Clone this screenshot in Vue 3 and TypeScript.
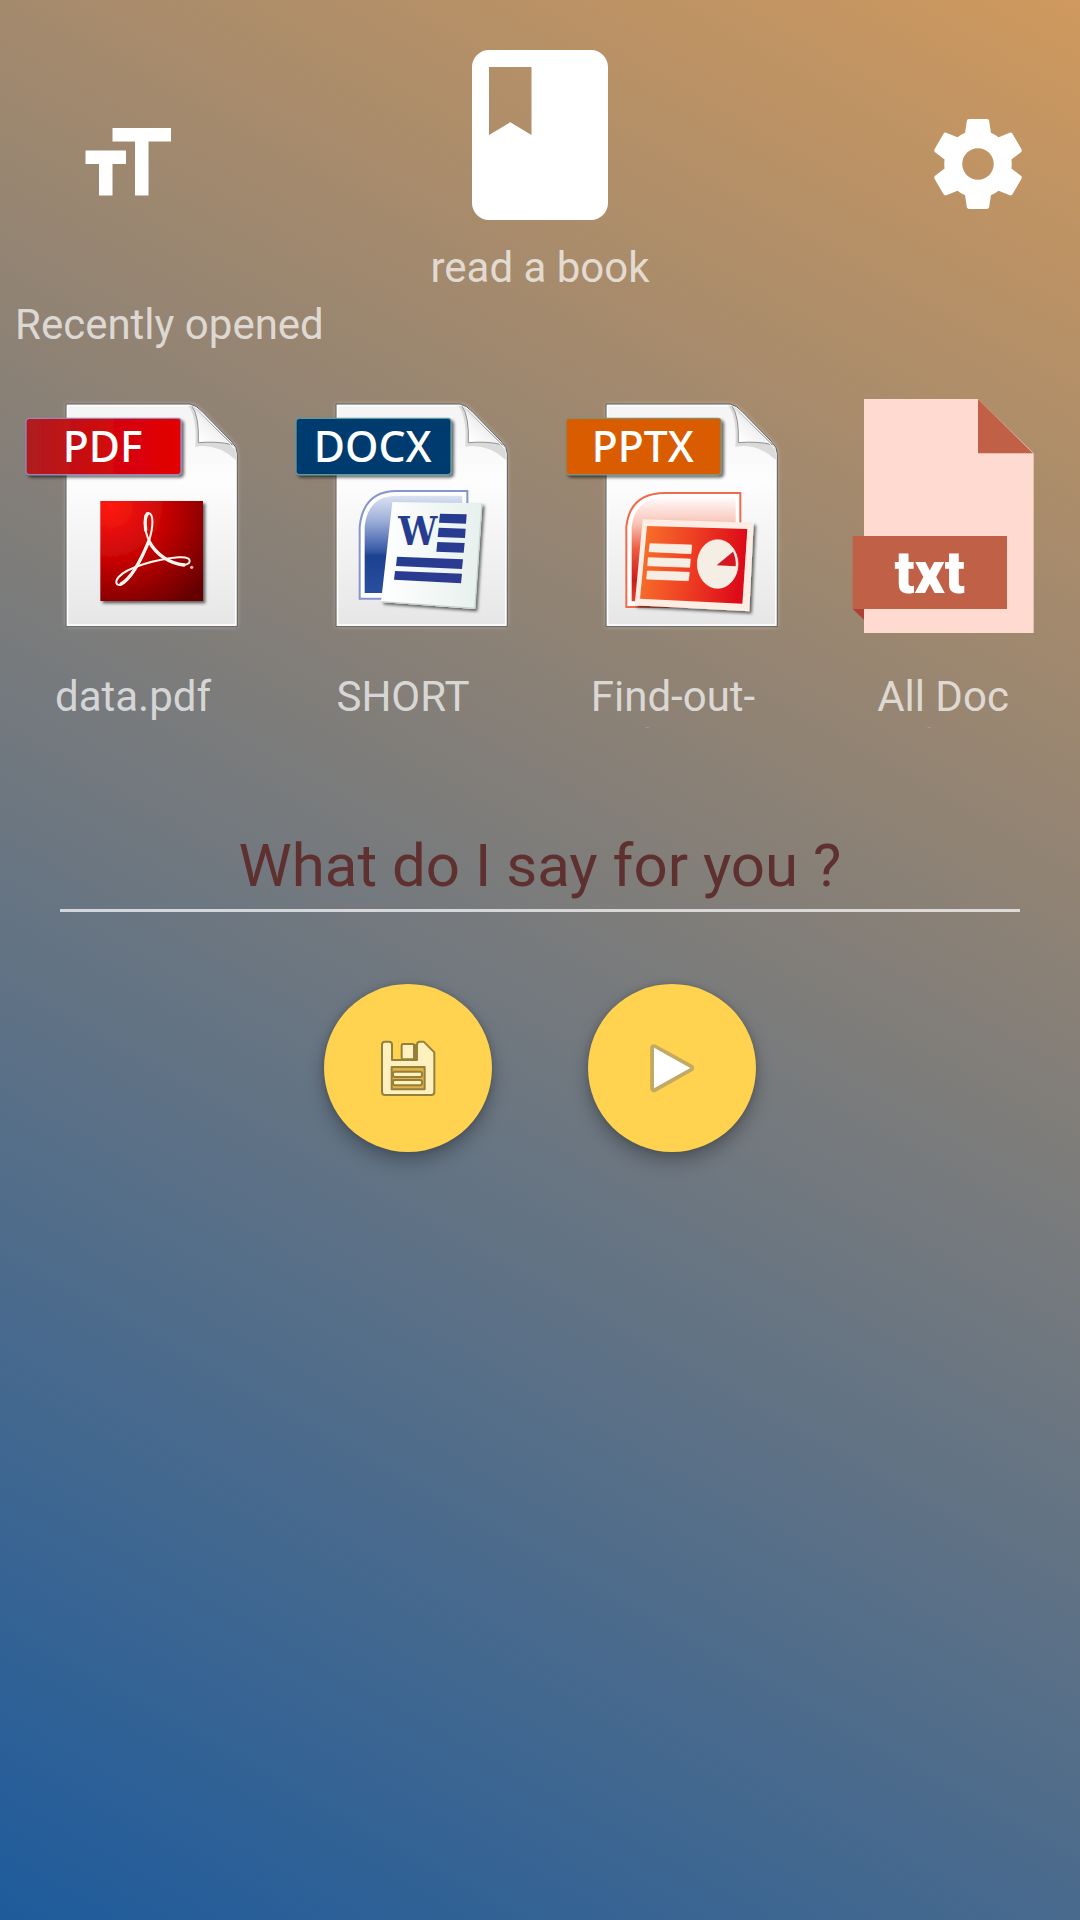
<script setup lang="ts">
import { ref } from 'vue'

type Kind = 'pdf' | 'docx' | 'pptx' | 'txt'

interface RecentFile {
  kind: Kind
  badge: string
  color: string
  edge: string
  name: string
}

const files: RecentFile[] = [
  { kind: 'pdf', badge: 'PDF', color: 'url(#pdfBadge)', edge: '#9a84b8', name: 'data.pdf' },
  { kind: 'docx', badge: 'DOCX', color: '#003a70', edge: '#5f9a9c', name: 'SHORT' },
  { kind: 'pptx', badge: 'PPTX', color: '#d95b00', edge: '#7f8f78', name: 'Find-out- if.ppt' },
  { kind: 'txt', badge: 'txt', color: '#bf6047', edge: 'none', name: 'All Doc for' },
]

const speech = ref('')
</script>

<template>
  <main class="screen">
    <header class="top">
      <button class="icon-button size-button" type="button" aria-label="Text size">
        <svg viewBox="0 0 24 24"><path d="M9 4v3h5v12h3V7h5V4H9zm-6 8h3v7h3v-7h3V9H3v3z" /></svg>
      </button>
      <button class="book-button" type="button">
        <svg viewBox="0 0 24 24">
          <path d="M18 2H6c-1.1 0-2 .9-2 2v16c0 1.1.9 2 2 2h12c1.1 0 2-.9 2-2V4c0-1.1-.9-2-2-2zM6 4h5v8l-2.5-1.5L6 12V4z" />
        </svg>
        <span>read a book</span>
      </button>
      <button class="icon-button settings-button" type="button" aria-label="Settings">
        <svg viewBox="0 0 24 24">
          <path d="M19.43 12.98c.04-.32.07-.64.07-.98s-.03-.66-.07-.98l2.11-1.65c.19-.15.24-.42.12-.64l-2-3.46c-.12-.22-.39-.3-.61-.22l-2.49 1c-.52-.4-1.08-.73-1.69-.98l-.38-2.65C14.46 2.18 14.25 2 14 2h-4c-.25 0-.46.18-.49.42l-.38 2.65c-.61.25-1.17.59-1.69.98l-2.49-1c-.23-.09-.49 0-.61.22l-2 3.46c-.13.22-.07.49.12.64l2.11 1.65c-.04.32-.07.65-.07.98s.03.66.07.98l-2.11 1.65c-.19.15-.24.42-.12.64l2 3.46c.12.22.39.3.61.22l2.49-1c.52.4 1.08.73 1.69.98l.38 2.65c.03.24.24.42.49.42h4c.25 0 .46-.18.49-.42l.38-2.65c.61-.25 1.17-.59 1.69-.98l2.49 1c.23.09.49 0 .61-.22l2-3.46c.12-.22.07-.49-.12-.64l-2.11-1.65zM12 15.5c-1.93 0-3.5-1.57-3.5-3.5s1.57-3.5 3.5-3.5 3.5 1.57 3.5 3.5-1.57 3.5-3.5 3.5z" />
        </svg>
      </button>
    </header>

    <h2 class="recent-title">Recently opened</h2>

    <svg class="defs" aria-hidden="true">
      <defs>
        <linearGradient id="paper" x1="0" y1="0" x2="0" y2="1">
          <stop offset="0" stop-color="#f4f4f4" />
          <stop offset="0.35" stop-color="#fdfdfd" />
          <stop offset="1" stop-color="#e6e6e6" />
        </linearGradient>
        <linearGradient id="foldShade" x1="0.2" y1="0.9" x2="0.75" y2="0.35">
          <stop offset="0" stop-color="#ffffff" />
          <stop offset="0.55" stop-color="#f2f2f2" />
          <stop offset="1" stop-color="#b4b4b4" />
        </linearGradient>
        <linearGradient id="pdfBadge" x1="0" y1="0" x2="1" y2="0">
          <stop offset="0" stop-color="#ae1d20" />
          <stop offset="0.6" stop-color="#d60508" />
          <stop offset="1" stop-color="#e30005" />
        </linearGradient>
        <radialGradient id="pdfTile" cx="0.1" cy="0.05" r="1.2">
          <stop offset="0" stop-color="#ff1a12" />
          <stop offset="0.45" stop-color="#c80505" />
          <stop offset="1" stop-color="#640000" />
        </radialGradient>
        <linearGradient id="wordBack" x1="0" y1="0" x2="0" y2="1">
          <stop offset="0" stop-color="#dbe2f2" />
          <stop offset="0.25" stop-color="#9fb0da" />
          <stop offset="0.56" stop-color="#3a5ba8" />
          <stop offset="0.62" stop-color="#1c418f" />
          <stop offset="1" stop-color="#2a4f9e" />
        </linearGradient>
        <linearGradient id="wordInk" x1="0" y1="0" x2="1" y2="1">
          <stop offset="0" stop-color="#1f3f92" />
          <stop offset="1" stop-color="#2f3990" />
        </linearGradient>
        <linearGradient id="wordPage" x1="0" y1="0" x2="1" y2="0">
          <stop offset="0" stop-color="#ffffff" />
          <stop offset="1" stop-color="#e6f0ec" />
        </linearGradient>
        <linearGradient id="pptBack" x1="0" y1="0" x2="0" y2="1">
          <stop offset="0" stop-color="#fffafa" />
          <stop offset="0.25" stop-color="#f9c3b6" />
          <stop offset="0.5" stop-color="#ec5b40" />
          <stop offset="0.8" stop-color="#c91d1b" />
          <stop offset="1" stop-color="#df4527" />
        </linearGradient>
        <linearGradient id="pptSlide" x1="0" y1="0" x2="1" y2="0.1">
          <stop offset="0" stop-color="#f8742c" />
          <stop offset="0.5" stop-color="#ee4023" />
          <stop offset="1" stop-color="#dd0a18" />
        </linearGradient>
        <filter id="drop" x="-20%" y="-20%" width="150%" height="150%">
          <feDropShadow dx="7" dy="7" stdDeviation="5" flood-color="#000" flood-opacity="0.6" />
        </filter>
        <filter id="glow" x="-20%" y="-20%" width="140%" height="140%">
          <feDropShadow dx="0" dy="0" stdDeviation="6" flood-color="#fff" flood-opacity="0.4" />
        </filter>
      </defs>
    </svg>

    <ul class="files">
      <li v-for="file in files" :key="file.kind">
        <a class="file" href="#">
          <svg class="file-icon" viewBox="-30 0 810 810" role="img" :aria-label="file.badge">
            <template v-if="file.kind === 'txt'">
              <path d="M132 57H474L641 220V759H132z" fill="#ffdad1" />
              <path d="M474 57V220H639z" fill="#bf6047" />
              <path d="M98 687H132V719z" fill="#ad4134" />
              <path d="M98 468H561V687H98z" :fill="file.color" />
              <text class="txt-text" x="329" y="638">{{ file.badge }}</text>
            </template>
            <template v-else>
              <path d="M168 72H540Q560 76 576 94L664 184Q682 202 682 221V740H168z" fill="url(#paper)" filter="url(#glow)" />
              <path d="M173 77H540Q560 82 576 100L660 188Q677 208 677 224V735H173z" fill="none" stroke="#fff" stroke-width="4" />
              <path d="M534 76Q562 110 556 200Q620 188 678 240V222Q678 204 662 187L574 98Q558 78 534 76z" fill="#bcbcbc" opacity="0.5" />
              <path d="M546 78Q568 110 565 188Q620 183 667 194z" fill="url(#foldShade)" stroke="#909090" stroke-width="3" />
              <path d="M548 79L674 206" stroke="#fff" stroke-width="3" />
              <path d="M168 72H540Q560 76 576 94L664 184Q682 202 682 221V740H168z" fill="none" stroke="#5c5c5a" stroke-width="3" />
              <rect x="48" y="115" width="465" height="169" rx="10" :fill="file.color" :stroke="file.edge" stroke-width="4" filter="url(#drop)" />
              <text class="badge-text" x="278" y="246">{{ file.badge }}</text>
            </template>

            <template v-if="file.kind === 'pdf'">
              <rect x="271" y="363" width="308" height="300" fill="url(#pdfTile)" filter="url(#drop)" />
              <g fill="none" stroke="#fff4ee" stroke-linecap="round" stroke-linejoin="round">
                <path d="M417 482C402 450 399 401 415 399C432 400 430 443 417 482C396 530 362 603 333 614C317 618 315 604 326 591C350 563 440 537 505 532C532 530 544 537 537 549C518 568 445 536 417 482z" stroke-width="6" />
                <path d="M407 450C404 421 405 407 413 401M417 482C386 558 360 598 333 612M417 484C440 526 480 550 522 555" stroke-width="10" />
              </g>
              <circle cx="545" cy="562" r="5" fill="#f4b9b2" />
            </template>

            <template v-if="file.kind === 'docx'">
              <path d="M239 656V440Q250 333 350 333H562V656z" fill="#fff" stroke="#8595cf" stroke-width="6" />
              <path d="M254 639V440Q264 347 350 347H547V639z" fill="url(#wordBack)" />
              <path d="M337 366L607 370L585 687L303 666z" fill="url(#wordPage)" filter="url(#drop)" />
              <path d="M606 371L585 685L305 665" fill="none" stroke="#c6d2cd" stroke-width="4" />
              <g fill="url(#wordInk)">
                <path d="M480 401L560 403 558 431 477 428zM476 443L557 446 555 474 473 471zM472 486L554 489 551 518 469 515zM351 530L549 538 546 567 348 558zM345 573L546 581 543 610 342 599z" />
                <text class="word-text" x="413" y="496">W</text>
              </g>
            </template>

            <template v-if="file.kind === 'pptx'">
              <path d="M229 681V440Q240 339 345 339H571V681z" fill="#fff" stroke="#f06a4c" stroke-width="6" />
              <path d="M245 664V440Q255 353 345 353H557V664z" fill="url(#pptBack)" />
              <path d="M278 418L611 428L598 694L254 676z" fill="#fdeee5" filter="url(#drop)" />
              <path d="M291 438L592 447L577 671L270 656z" fill="url(#pptSlide)" />
              <g fill="#f4eee4" stroke="#fff8ef" stroke-width="2">
                <path d="M300 491L425 495 423 521 297 515zM295 533L421 537 419 562 293 557zM292 573L418 577 415 602 290 597z" />
                <ellipse cx="503" cy="552" rx="61" ry="73" />
              </g>
              <path d="M500 556L549 515Q559 536 557 559z" fill="#d51520" />
            </template>
          </svg>
          <span class="file-name">{{ file.name }}</span>
        </a>
      </li>
    </ul>

    <input v-model="speech" class="speech" type="text" placeholder="What do I say for you ?" aria-label="What do I say for you ?" />

    <div class="actions">
      <button class="fab" type="button" aria-label="Save">
        <svg viewBox="0 0 504 504">
          <g fill="#fff0bf" stroke="#94803a" stroke-width="6" stroke-linejoin="round">
            <path d="M183 173H195Q204 173 204 182V228H279V182Q279 173 288 173H299L331 205V324Q331 333 322 333H183Q174 333 174 324V182Q174 173 183 173z" />
            <path d="M268 180H278V227H268z" fill="#94803a" stroke="none" />
            <rect x="233" y="180" width="37" height="46" rx="4" />
            <rect x="203" y="249" width="99" height="67" fill="#dfb246" />
            <rect x="207" y="263" width="87" height="16" rx="6" />
            <rect x="207" y="288" width="87" height="16" rx="6" />
          </g>
        </svg>
      </button>
      <button class="fab" type="button" aria-label="Play">
        <svg viewBox="0 0 504 504">
          <path d="M198 192L307 252L198 313z" fill="#c3a961" stroke="#c3a961" stroke-width="23" stroke-linejoin="round" />
          <path d="M198 191L307 252L198 313z" fill="#fff" />
        </svg>
      </button>
    </div>
  </main>
</template>

<style>
body {
  margin: 0;
}
</style>

<style scoped>
.screen {
  box-sizing: border-box;
  min-height: 100vh;
  padding-top: 33px;
  background: linear-gradient(29.4deg, #1e5b9c, #cf995e);
  color: rgba(255, 255, 255, 0.7);
  font-family: Roboto, sans-serif;
  font-size: 42px;
  line-height: 49px;
}

button {
  padding: 0;
  border: 0;
  background: none;
  color: inherit;
  font: inherit;
  cursor: pointer;
}

svg {
  display: block;
}

.defs {
  position: absolute;
  width: 0;
  height: 0;
}

.top {
  display: grid;
  grid-template-columns: 1fr auto 1fr;
  align-items: start;
  fill: #fff;
}

.icon-button {
  width: 108px;
  height: 108px;
  margin-top: 77px;
}

.size-button {
  margin-left: 72px;
}

.settings-button {
  justify-self: end;
  margin-right: 48px;
}

.book-button {
  display: flex;
  flex-direction: column;
  align-items: center;
  gap: 6px;
}

.book-button svg {
  width: 204px;
  height: 204px;
}

.recent-title {
  margin: 8px 15px 31px;
  font-size: 42px;
  font-weight: 400;
}

.files {
  display: grid;
  grid-template-columns: repeat(4, 1fr);
  margin: 0;
  padding: 0;
  list-style: none;
}

.file {
  display: flex;
  flex-direction: column;
  align-items: center;
  gap: 22px;
  color: inherit;
  text-decoration: none;
}

.file-icon {
  width: 100%;
}

.file-name {
  box-sizing: border-box;
  width: 180px;
  height: 56px;
  padding-right: 4px;
  overflow: hidden;
  text-align: center;
}

.badge-text {
  fill: #fff;
  font-family: "Noto Sans", "Open Sans", sans-serif;
  font-size: 128px;
  font-weight: 500;
  text-anchor: middle;
}

.txt-text {
  fill: #fff;
  font-family: Roboto, sans-serif;
  font-size: 176px;
  font-weight: 900;
  text-anchor: middle;
}

.word-text {
  font-family: "DejaVu Serif Condensed", "DejaVu Serif", serif;
  font-size: 116px;
  font-weight: 700;
  text-anchor: middle;
}

.speech {
  display: block;
  box-sizing: border-box;
  width: calc(100% - 120px);
  height: 82px;
  margin: 102px 60px 72px;
  padding: 0 0 9px;
  border: 0;
  border-bottom: 3px solid rgba(255, 255, 255, 0.7);
  border-radius: 0;
  outline: 0;
  background: none;
  color: #5e3030;
  font-family: Roboto, sans-serif;
  font-size: 60px;
  line-height: 70px;
  text-align: center;
}

.speech::placeholder {
  color: #5e3030;
  opacity: 1;
}

.actions {
  display: flex;
  justify-content: center;
  gap: 96px;
}

.fab {
  width: 168px;
  height: 168px;
  border-radius: 50%;
  background: #ffd24f;
  box-shadow: 0 9px 18px rgba(0, 0, 0, 0.28), 0 0 6px rgba(0, 0, 0, 0.14);
}
</style>
